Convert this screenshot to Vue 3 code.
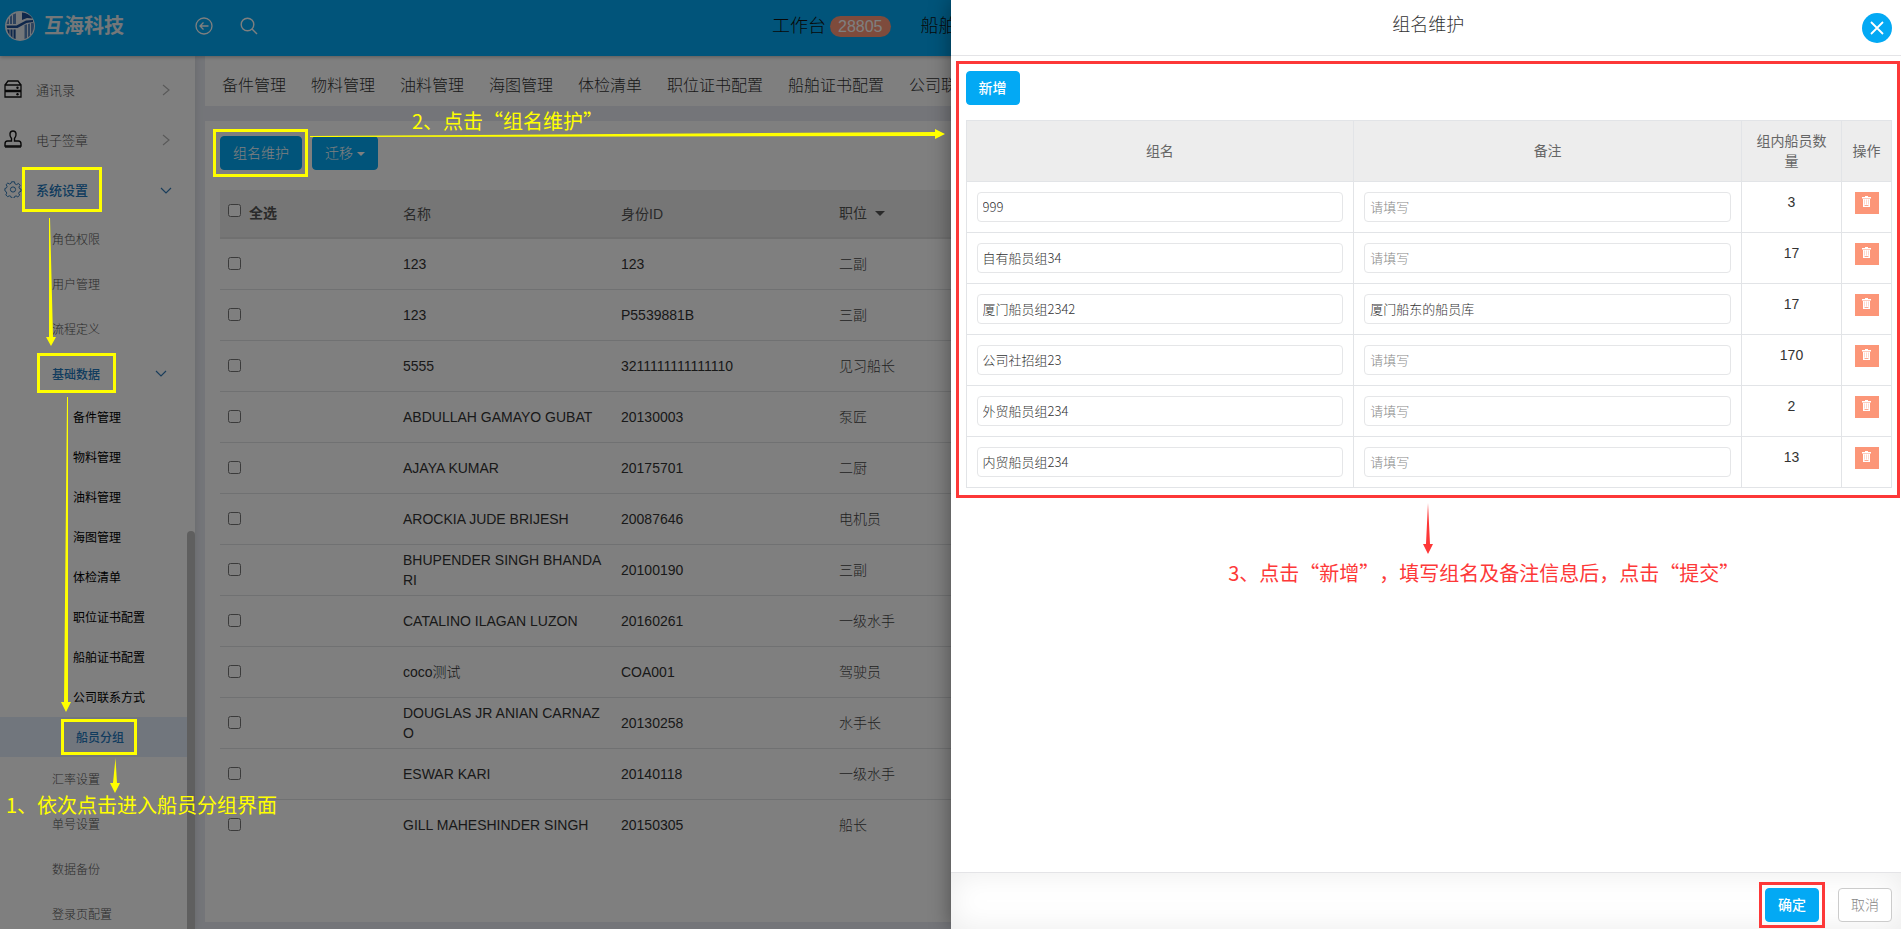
<script setup>
import { ref } from 'vue'

const tabs = ['备件管理', '物料管理', '油料管理', '海图管理', '体检清单', '职位证书配置', '船舶证书配置', '公司联系']

const settingsTop = ['角色权限', '用户管理', '流程定义']
const baseData = ['备件管理', '物料管理', '油料管理', '海图管理', '体检清单', '职位证书配置', '船舶证书配置', '公司联系方式', '船员分组']
const settingsBottom = ['汇率设置', '单号设置', '数据备份', '登录页配置']

const crew = [
  { name: '123', id: '123', job: '二副' },
  { name: '123', id: 'P5539881B', job: '三副' },
  { name: '5555', id: '3211111111111110', job: '见习船长' },
  { name: 'ABDULLAH GAMAYO GUBAT', id: '20130003', job: '泵匠' },
  { name: 'AJAYA KUMAR', id: '20175701', job: '二厨' },
  { name: 'AROCKIA JUDE BRIJESH', id: '20087646', job: '电机员' },
  { name: 'BHUPENDER SINGH BHANDARI', id: '20100190', job: '三副' },
  { name: 'CATALINO ILAGAN LUZON', id: '20160261', job: '一级水手' },
  { name: 'coco测试', id: 'COA001', job: '驾驶员' },
  { name: 'DOUGLAS JR ANIAN CARNAZO', id: '20130258', job: '水手长' },
  { name: 'ESWAR KARI', id: '20140118', job: '一级水手' },
  { name: 'GILL MAHESHINDER SINGH', id: '20150305', job: '船长' },
]

const groups = ref([
  { name: '999', note: '', count: 3 },
  { name: '自有船员组34', note: '', count: 17 },
  { name: '厦门船员组2342', note: '厦门船东的船员库', count: 17 },
  { name: '公司社招组23', note: '', count: 170 },
  { name: '外贸船员组234', note: '', count: 2 },
  { name: '内贸船员组234', note: '', count: 13 },
])
</script>

<template>
  <div class="page">
    <header class="topbar">
      <svg class="logo" viewBox="0 0 30 30" aria-hidden="true">
        <circle cx="15" cy="15" r="15" fill="#e9eef4" />
        <path d="M11 2.200A13.600 13.600 0 0 0 1.600 13H11z" fill="#5d86bd" />
        <path d="M17 1.600v7.400l5-2 5.500.5A13.600 13.600 0 0 0 17 1.600z" fill="#1f4f96" />
        <path d="M2 18.400h8.600V28A13.600 13.600 0 0 1 2 18.400z" fill="#1f4f96" />
        <path d="M19.500 14l9-2.600a13.600 13.600 0 0 1-9 16.500z" fill="#5d86bd" />
        <path d="M4.500 5.500V13M7.500 3.500V13M22.500 13v14M25.500 12v12M5 18v8M8 18v9" stroke="#e9eef4" stroke-width="1" fill="none" />
        <path d="M1.500 14.500h10L21 9.500l7-.5v2l-6.500 1-9 5H2z" fill="#1f4f96" />
        <path d="M12.500 20l5-3v10l-5 1z" fill="#e9eef4" />
      </svg>
      <strong class="brand">互海科技</strong>
      <button class="bar-icon back" aria-label="返回">
        <svg width="18" height="18" viewBox="0 0 18 18"><g fill="none" stroke="#fff" stroke-width="1.300"><circle cx="9" cy="9" r="8" /><path d="M13.500 9H5M8.500 5.500L5 9l3.500 3.500" /></g></svg>
      </button>
      <button class="bar-icon" aria-label="搜索">
        <svg width="18" height="18" viewBox="0 0 18 18"><g fill="none" stroke="#fff" stroke-width="1.400"><circle cx="7.500" cy="7.500" r="6.300" /><path d="M12 12l5 5" /></g></svg>
      </button>
      <nav class="topnav">
        <a href="#">工作台<span class="badge">28805</span></a>
        <a href="#">船舶</a>
      </nav>
    </header>

    <div class="body">
      <aside class="sidebar">
        <nav class="menu">
          <a href="#" class="lv1">
            <svg class="lead" width="18" height="18" viewBox="0 0 18 18"><g fill="none" stroke="#111" stroke-width="1.300"><path d="M1 5L4 1h10l3 4M1 5h16v5.500H1zM1 11.500h16V17H1z" /></g><circle cx="13.500" cy="7.800" r="1.200" fill="#111" /><circle cx="13.500" cy="14.300" r="1.200" fill="#111" /></svg>
            通讯录
            <svg class="go" width="8" height="12" viewBox="0 0 8 12"><path d="M1 1l6 5-6 5" fill="none" stroke="#b4b4b4" stroke-width="1.200" /></svg>
          </a>
          <a href="#" class="lv1">
            <svg class="lead" width="18" height="18" viewBox="0 0 18 18"><g fill="none" stroke="#111" stroke-width="1.400"><path d="M7.500 11V8.500C5 5.500 5.500 1 9 1s4 4.500 1.500 7.500V11h4c1.500 0 2.500 1 2.500 3v2H1v-2c0-2 1-3 2.500-3z" /><path d="M1 17h16" /></g></svg>
            电子签章
            <svg class="go" width="8" height="12" viewBox="0 0 8 12"><path d="M1 1l6 5-6 5" fill="none" stroke="#b4b4b4" stroke-width="1.200" /></svg>
          </a>
          <a href="#" class="lv1 on">
            <svg class="lead" width="17" height="17" viewBox="0 0 17 17"><g fill="none" stroke="#337ab7" stroke-width="1"><circle cx="8.500" cy="8.500" r="2.600" /><path d="M7 .8h3l.4 2 1.700.8 1.900-1.200 1.600 2-1.200 1.600.6 1.600 1.500.5v2.200l-1.700.6-.6 1.500 1 1.700-1.900 1.800-1.700-1-1.500.6-.6 1.700H7l-.6-1.800-1.600-.6-1.700.9-1.800-1.800.9-1.700-.6-1.600L.4 9.800V7.500l1.600-.6.6-1.600-1-1.600 1.700-1.700 1.700 1 1.500-.6z" /></g></svg>
            系统设置
            <svg class="go" width="12" height="7" viewBox="0 0 12 7"><path d="M1 1l5 5 5-5" fill="none" stroke="#337ab7" stroke-width="1.200" /></svg>
          </a>
          <div class="sub">
            <a v-for="s in settingsTop" :key="s" href="#" class="lv2">{{ s }}</a>
            <a href="#" class="lv2 on">
              基础数据
              <svg class="go" width="12" height="7" viewBox="0 0 12 7"><path d="M1 1l5 5 5-5" fill="none" stroke="#337ab7" stroke-width="1.200" /></svg>
            </a>
            <a v-for="(s, i) in baseData" :key="'b' + s" href="#" class="lv3" :class="{ current: i === 8 }">{{ s }}</a>
            <a v-for="s in settingsBottom" :key="s" href="#" class="lv2">{{ s }}</a>
          </div>
        </nav>
        <div class="thumb"></div>
      </aside>

      <main class="main">
        <nav class="tabs">
          <a v-for="t in tabs" :key="t" href="#">{{ t }}</a>
        </nav>
        <section class="panel">
          <div class="actions">
            <button class="btn">组名维护</button>
            <button class="btn">迁移<i class="caret"></i></button>
          </div>
          <table class="crew">
            <colgroup><col class="c-check" /><col class="c-mid" /><col class="c-mid" /><col /></colgroup>
            <thead>
              <tr>
                <th class="raised"><label class="all"><input type="checkbox" />全选</label></th>
                <th>名称</th>
                <th>身份ID</th>
                <th class="raised">职位<i class="caret"></i></th>
              </tr>
            </thead>
            <tbody>
              <tr v-for="(c, i) in crew" :key="i">
                <td><input type="checkbox" :aria-label="c.name" /></td>
                <td>{{ c.name }}</td>
                <td>{{ c.id }}</td>
                <td class="job">{{ c.job }}</td>
              </tr>
            </tbody>
          </table>
        </section>
      </main>
    </div>

    <div class="mask"></div>

    <section class="drawer" role="dialog" aria-labelledby="drawer-title">
      <header class="drawer-head">
        <h2 id="drawer-title">组名维护</h2>
        <button class="close" aria-label="关闭">
          <svg width="14" height="14" viewBox="0 0 14 14"><path d="M1 1l12 12M13 1L1 13" stroke="#fff" stroke-width="1.800" fill="none" /></svg>
        </button>
      </header>
      <div class="drawer-body">
        <div class="marked">
          <button class="btn solid">新增</button>
          <table class="groups">
            <colgroup><col /><col /><col class="c-count" /><col class="c-op" /></colgroup>
            <thead>
              <tr><th>组名</th><th>备注</th><th>组内船员数量</th><th>操作</th></tr>
            </thead>
            <tbody>
              <tr v-for="(g, i) in groups" :key="i">
                <td><input v-model="g.name" type="text" placeholder="请填写" aria-label="组名" /></td>
                <td><input v-model="g.note" type="text" placeholder="请填写" aria-label="备注" /></td>
                <td class="count">{{ g.count }}</td>
                <td class="op">
                  <button class="del" aria-label="删除">
                    <svg width="9" height="11" viewBox="0 0 9 11"><path d="M3 0h3v1h3v1.500H0V1h3zM1 3h7v8H1z" fill="#fff" /><path d="M2.500 3.500v5M4.500 3.500v5M6.500 3.500v5" stroke="#fc9678" stroke-width=".6" opacity=".6" /><path d="M2.500 9.500h4" stroke="#fc9678" stroke-width=".8" /></svg>
                  </button>
                </td>
              </tr>
            </tbody>
          </table>
        </div>
        <div class="tip">
          <svg width="12" height="52" viewBox="0 0 12 52"><path d="M6 0l2 41h3L6 51 1 41h3z" fill="#fd3838" /></svg>
          <p class="note red">3、点击“新增”，填写组名及备注信息后，点击“提交”</p>
        </div>
      </div>
      <footer class="drawer-foot">
        <span class="ring"><button class="btn solid">确定</button></span>
        <button class="btn plain">取消</button>
      </footer>
    </section>

    <div class="guide">
      <i class="box box-settings"></i>
      <i class="box box-base"></i>
      <i class="box box-group"></i>
      <i class="box box-maintain"></i>
      <svg class="arrows" width="951" height="929" viewBox="0 0 951 929" aria-hidden="true">
        <g fill="#ff0">
          <path d="M49 218h1l3 119h3l-5 9-5-9h3z" />
          <path d="M67 397h1v305h3l-5 10-5-10h3z" />
          <path d="M115.500 758l1.500 25h3l-5 10-5-10h3z" />
          <path d="M310 136l625-4v-3l10 5-10 5v-3l-625 1z" />
        </g>
      </svg>
      <p class="note note-1">1、依次点击进入船员分组界面</p>
      <p class="note note-2">2、点击“组名维护”</p>
    </div>
  </div>
</template>

<style>
body {
  margin: 0;
  overflow: hidden;
}
</style>

<style scoped>
.page {
  position: relative;
  display: flex;
  flex-direction: column;
  height: 100vh;
  overflow: hidden;
  background: #e8ebf2;
  color: #333;
  font-family: "Liberation Sans", "Noto Sans CJK SC", sans-serif;
  font-size: 14px;
  font-weight: 300;
}
.page * { box-sizing: border-box; }
a { color: inherit; text-decoration: none; }
button, input { font: inherit; margin: 0; }
p, h2 { margin: 0; }

.topbar {
  position: relative;
  z-index: 2;
  display: flex;
  align-items: center;
  flex: none;
  height: 56px;
  padding: 0 0 4px 5px;
  background: #03a9f4;
  box-shadow: 0 1px 4px rgba(0, 0, 0, 0.3);
}
.logo { width: 30px; height: 30px; }
.brand {
  width: 151px;
  margin-left: 9px;
  color: #e8eef2;
  font-size: 20px;
  font-weight: 700;
  line-height: 30px;
}
.bar-icon {
  display: flex;
  padding: 0;
  border: 0;
  background: none;
}
.bar-icon.back { margin-right: 27px; }
.topnav {
  display: flex;
  gap: 30px;
  margin-left: 514px;
  white-space: nowrap;
  color: #111;
  font-size: 18px;
}
.topnav a { display: flex; align-items: center; line-height: 26px; }
.badge {
  height: 21px;
  margin-left: 4px;
  padding: 0 8px;
  border-radius: 11px;
  background: #fc9678;
  color: #fff;
  font-size: 16px;
  line-height: 21px;
}

.body { display: flex; flex: 1; min-height: 0; }

.sidebar {
  position: relative;
  z-index: 1;
  flex: none;
  width: 195px;
  overflow: hidden;
  background: #fff;
  box-shadow: 0 0 8px rgba(0, 0, 0, 0.12);
}
.menu { width: 187px; padding-top: 9px; color: #555; }
.menu a { display: flex; align-items: center; padding-bottom: 2px; }
.menu .lv1 { height: 50px; padding-left: 4px; padding-right: 17px; font-size: 13px; }
.lv1 .lead { flex: none; width: 18px; margin-right: 14px; }
.go { margin-left: auto; }
.lv1 .go { margin-top: 2px; }
.menu .on, .menu .current { color: #2378bd; font-weight: 500; }
.menu .lv1.on { padding-right: 15px; }
.sub { margin-top: 2px; font-size: 12px; }
.lv2 { height: 45px; padding-left: 52px; padding-right: 20px; }
.lv3 { height: 40px; padding-left: 73px; color: #000; font-weight: 400; }
.lv3.current { padding-left: 76px; background: #e2ecfb; }
.thumb {
  position: absolute;
  top: 475px;
  right: 0;
  bottom: 0;
  width: 8px;
  border-radius: 4px 4px 0 0;
  background: #bfbfbf;
}

.main {
  display: flex;
  flex-direction: column;
  flex: 1;
  gap: 15px;
  min-width: 0;
  padding: 0 10px 7px;
}
.tabs {
  display: flex;
  align-items: center;
  flex: none;
  gap: 25px;
  height: 50px;
  padding: 6px 17px 0;
  background: #fff;
  white-space: nowrap;
  color: #333;
  font-size: 16px;
}
.panel { flex: 1; padding: 15px; background: #fff; }
.actions { display: flex; gap: 10px; margin-bottom: 20px; }
.btn {
  height: 34px;
  padding: 0 12px;
  border: 1px solid #03a9f4;
  border-radius: 4px;
  background: #03a9f4;
  color: #fff;
  font-size: 14px;
  line-height: 20px;
}
.btn.solid { font-weight: 500; }
.btn.plain { border-color: #ccc; background: #fff; color: #888; }
.caret {
  display: inline-block;
  margin-left: 4px;
  border: 4px solid transparent;
  border-top-color: currentColor;
  border-bottom: 0;
  vertical-align: middle;
}

.crew { width: 100%; border-collapse: collapse; table-layout: fixed; }
.c-check { width: 175px; }
.c-mid { width: 218px; }
.crew th {
  height: 48px;
  padding: 0 8px 1px;
  border-bottom: 2px solid #e0e0e0;
  background: #ededed;
  color: #555;
  font-weight: 400;
  text-align: left;
}
.crew th.raised { padding-bottom: 4px; }
.crew th .caret { margin-left: 8px; border-width: 5px 5px 0; }
.crew td {
  height: 51px;
  padding: 0 8px;
  border-bottom: 1px solid #e0e2e5;
  line-height: 20px;
  word-break: break-all;
}
.crew tr:last-child td { border-bottom: 0; }
.crew input { display: block; width: 13px; height: 13px; }
.crew .job { color: #444; }
.all { display: flex; align-items: center; gap: 8px; font-weight: 700; }
.all input { margin-bottom: 2px; }

.mask { position: absolute; inset: 0; z-index: 3; background: rgba(0, 0, 0, 0.5); }

.drawer {
  position: absolute;
  z-index: 4;
  top: 0;
  right: 0;
  bottom: 0;
  display: flex;
  flex-direction: column;
  width: 50%;
  background: #fff;
  box-shadow: 0 0 20px rgba(0, 0, 0, 0.4);
}
.drawer-head {
  display: flex;
  align-items: center;
  flex: none;
  height: 56px;
  padding: 0 9px 0 44px;
  border-bottom: 1px solid #e4e4e7;
}
.drawer-head h2 {
  flex: 1;
  padding-bottom: 10px;
  color: #333;
  font-size: 18px;
  font-weight: 300;
  text-align: center;
}
.close {
  display: flex;
  align-items: center;
  justify-content: center;
  width: 30px;
  height: 30px;
  padding: 0;
  border: 0;
  border-radius: 50%;
  background: #03a9f4;
}
.drawer-body { flex: 1; min-height: 0; padding: 5px 1px 0 5px; }
.marked { padding: 7px 5px 7px 7px; border: 3px solid #fd3838; }
.groups {
  width: 100%;
  margin-top: 15px;
  border-collapse: collapse;
  table-layout: fixed;
}
.c-count { width: 100px; }
.c-op { width: 50px; }
.groups th {
  height: 61px;
  padding: 10px;
  border: 1px solid #e2e4e7;
  background: #ededed;
  color: #666;
  font-weight: 400;
  line-height: 20px;
}
.groups th:last-child { padding: 0; }
.groups td {
  height: 51px;
  padding: 10px;
  border: 1px solid #e2e4e7;
  vertical-align: top;
}
.groups input {
  display: block;
  width: 100%;
  height: 30px;
  padding: 0 5px 2px;
  border: 1px solid #e5e6e8;
  border-radius: 4px;
  background: #fff;
  color: #333;
  font-family: "Noto Sans CJK SC", sans-serif;
  font-size: 13px;
}
.groups input::placeholder { color: #888; }
.groups .count { line-height: 20px; text-align: center; }
.groups .op { padding: 10px 0; }
.del {
  display: flex;
  justify-content: center;
  width: 24px;
  height: 22px;
  margin: 0 auto;
  padding: 4px 0 0;
  border: 0;
  background: #fc9678;
}
.tip { display: flex; flex-direction: column; align-items: center; margin-top: 5px; }
.note {
  white-space: nowrap;
  color: #ff0;
  font-family: "Noto Sans CJK SC", sans-serif;
  font-size: 20px;
  font-weight: 400;
  line-height: 30px;
  text-spacing-trim: space-all;
}
.note.red { margin-top: 3px; padding-left: 112px; color: #fd3838; }
.drawer-foot {
  display: flex;
  align-items: center;
  justify-content: flex-end;
  gap: 13px;
  flex: none;
  height: 57px;
  padding: 8px 9px 0 0;
  border-top: 1px solid #e4e4e7;
  box-shadow: inset 0 0 30px rgba(0, 0, 0, 0.08);
}
.ring { display: flex; padding: 3px; border: 3px solid #fd3838; }

.guide { position: absolute; inset: 0; z-index: 5; pointer-events: none; }
.arrows { position: absolute; top: 0; left: 0; }
.box { position: absolute; border: 3px solid #ff0; }
.box-settings { left: 22px; top: 167px; width: 80px; height: 45px; }
.box-base { left: 37px; top: 353px; width: 79px; height: 40px; }
.box-group { left: 61px; top: 719px; width: 76px; height: 36px; }
.box-maintain { left: 213px; top: 129px; width: 95px; height: 48px; }
.guide .note { position: absolute; }
.note-1 { left: 6px; top: 790px; }
.note-2 { left: 412px; top: 106px; }
</style>
